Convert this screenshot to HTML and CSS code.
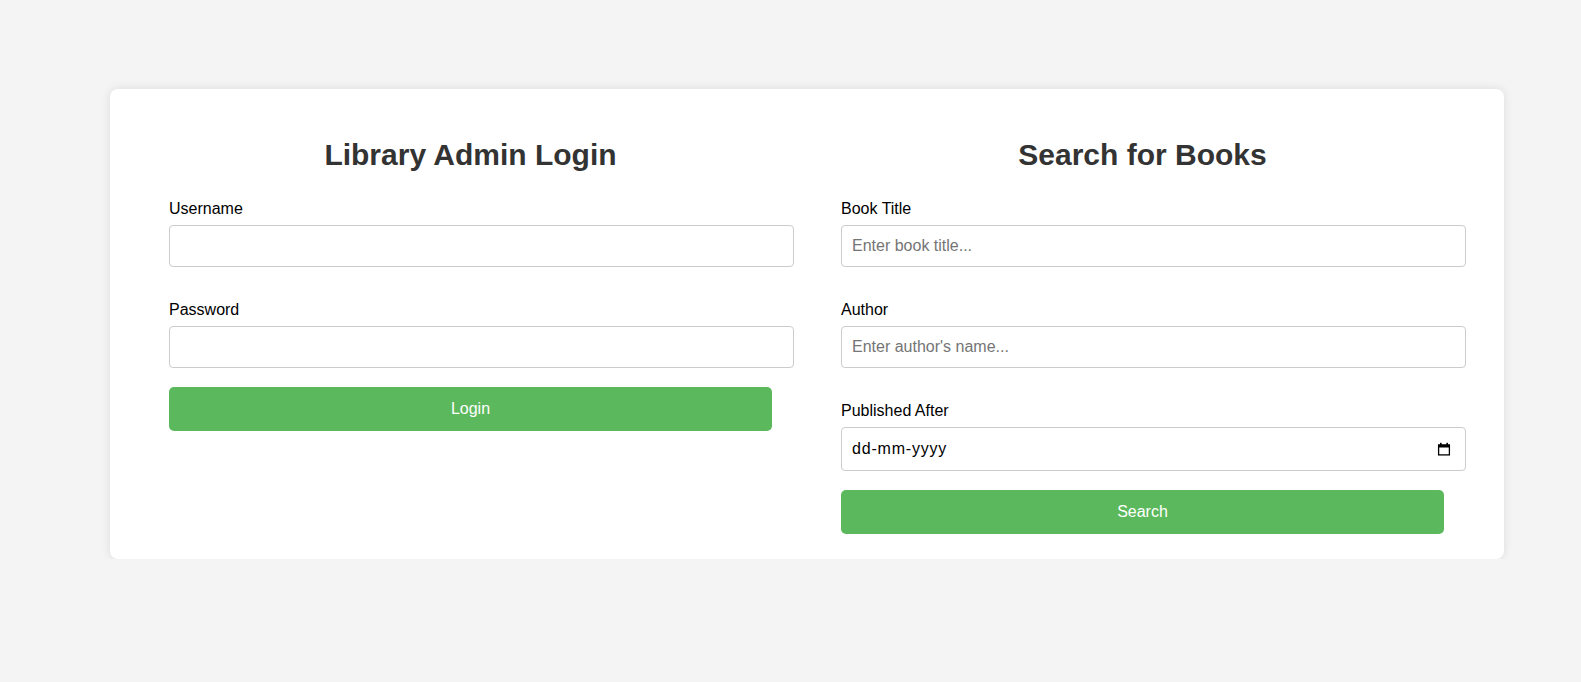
FILE: index.html
```html
<!DOCTYPE html>
<html lang="en">
<head>
<meta charset="utf-8">
<title>Library Admin</title>
<link rel="stylesheet" href="styles.css">
</head>
<body>
<main class="card">
  <section class="panel">
    <h2 class="panel-title">Library Admin Login</h2>
    <form class="form" onsubmit="return false">
      <div class="fields">
        <div class="field">
          <label class="label" for="username">Username</label>
          <input class="input" id="username" type="text">
        </div>
        <div class="field">
          <label class="label" for="password">Password</label>
          <input class="input" id="password" type="password">
        </div>
      </div>
      <button class="btn" type="submit">Login</button>
    </form>
  </section>
  <section class="panel">
    <h2 class="panel-title">Search for Books</h2>
    <form class="form" onsubmit="return false">
      <div class="fields">
        <div class="field">
          <label class="label" for="title">Book Title</label>
          <input class="input" id="title" type="text" placeholder="Enter book title...">
        </div>
        <div class="field">
          <label class="label" for="author">Author</label>
          <input class="input" id="author" type="text" placeholder="Enter author's name...">
        </div>
        <div class="field">
          <label class="label" for="published">Published After</label>
          <div class="date-box">
            <input class="date-text" id="published" type="text" placeholder="dd-mm-yyyy">
            <svg class="date-icon" width="14" height="14" viewBox="0 0 14 14" aria-hidden="true">
              <rect x="1.6" y="3.1" width="10.8" height="9.8" fill="none" stroke="#000" stroke-width="1.3"/>
              <rect x="1" y="2.5" width="12" height="3" fill="#000"/>
              <rect x="3" y="0.8" width="1.6" height="2.5" fill="#000"/>
              <rect x="9.4" y="0.8" width="1.6" height="2.5" fill="#000"/>
            </svg>
          </div>
        </div>
      </div>
      <button class="btn" type="submit">Search</button>
    </form>
  </section>
</main>
</body>
</html>
```

FILE: styles.css
```css
html, body {
  margin: 0;
  padding: 0;
}

body {
  background: #f4f4f4;
  font-family: "Liberation Sans", Arial, sans-serif;
  color: #000;
}

.card {
  margin: 89px 0 0 110px;
  width: 1394px;
  box-sizing: border-box;
  background: #fff;
  border-radius: 8px;
  box-shadow: 0 0 10px rgba(0, 0, 0, 0.1);
  padding: 49px 60px 25px 59px;
  display: flex;
  gap: 69px;
  align-items: flex-start;
}

.panel {
  width: 603px;
  flex: none;
}

.panel-title {
  margin: 0 0 27px;
  font-size: 30px;
  line-height: 34.5px;
  font-weight: bold;
  text-align: center;
  color: #333;
}

.form {
  margin: 0;
}

.fields {
  display: flex;
  flex-direction: column;
  gap: 33.6px;
  margin-bottom: 19px;
}

.label {
  display: block;
  font-size: 16px;
  line-height: 18.4px;
  margin-bottom: 7px;
}

.input {
  display: block;
  width: 100%;
  height: 20px;
  box-sizing: content-box;
  margin: 0;
  padding: 10px;
  border: 1px solid #ccc;
  border-radius: 4px;
  font-family: "Liberation Sans", Arial, sans-serif;
  font-size: 16px;
  color: #000;
  background: #fff;
  outline: none;
}

.input::placeholder {
  color: #757575;
}

.date-box {
  display: flex;
  align-items: center;
  width: calc(100% - 4px);
  height: 22px;
  box-sizing: content-box;
  padding: 10px 14px 10px 10px;
  border: 1px solid #ccc;
  border-radius: 4px;
  background: #fff;
}

.date-text {
  flex: 1;
  min-width: 0;
  margin: 0;
  padding: 0;
  border: none;
  outline: none;
  background: transparent;
  font-family: "Liberation Sans", Arial, sans-serif;
  font-size: 16px;
  letter-spacing: 0.8px;
  color: #000;
}

.date-text::placeholder {
  color: #000;
  opacity: 1;
}

.date-icon {
  flex: none;
  display: block;
}

.btn {
  display: block;
  width: 100%;
  box-sizing: border-box;
  margin: 0;
  padding: 13px;
  border: none;
  border-radius: 5px;
  background: #5cb85c;
  color: #fff;
  font-family: "Liberation Sans", Arial, sans-serif;
  font-size: 16px;
  line-height: 18.4px;
  cursor: pointer;
}
```
